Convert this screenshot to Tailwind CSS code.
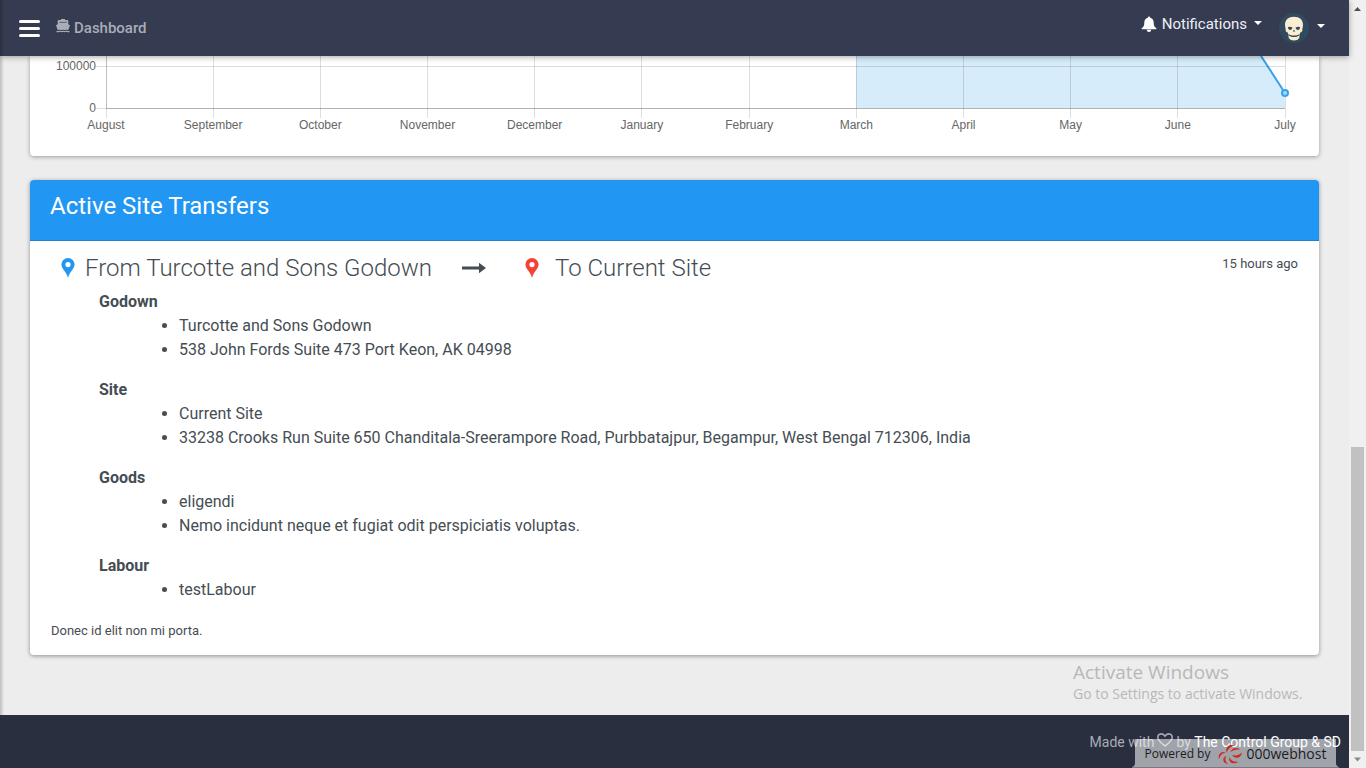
<!DOCTYPE html>
<html lang="en">
<head>
<meta charset="utf-8">
<title>Dashboard</title>
<script src="https://cdn.jsdelivr.net/npm/@tailwindcss/browser@4"></script>
</head>
<body class="flex h-screen overflow-hidden bg-[#ededed] font-['Roboto',sans-serif] text-base text-[#454d54]">
<div class="relative flex min-w-0 flex-1 flex-col">
  <header class="relative z-10 flex h-14 shrink-0 items-center bg-[#353b50] pl-[19px] pr-6 shadow-[0_1px_6px_rgba(0,0,0,0.35)]">
    <button aria-label="Toggle menu" class="flex w-[21px] flex-col gap-1">
      <span class="h-[3px] rounded-xs bg-white"></span>
      <span class="h-[3px] rounded-xs bg-white"></span>
      <span class="h-[3px] rounded-xs bg-white"></span>
    </button>
    <a href="#" class="ml-4 flex items-center gap-1 text-[15px] font-medium text-[#a9adb8]">
      <svg class="mb-1 h-[14px] w-[14px]" viewBox="0 0 14 14" fill="currentColor"><path d="M5 0h4v1h2.400q.9 0 .9.900v3.300L14 6.200l-1.700 4.900q-1.200 0-1.900-.6-.9.600-1.700.6T7 10.500q-.9.600-1.700.6t-1.700-.6q-.8.600-1.900.6L0 6.200l1.700-1V1.900q0-.9.900-.9H5z"/><path d="M3.200 2.800h7.600v1.100H3.200z" fill="#353b50" fill-opacity="0.6"/><path d="M.5 12q1.600.4 3.100-.5 1.700 1 3.400 0 1.700 1 3.400 0 1.500.9 3.100.5v1.200q-1.600.3-3.100-.5-1.700.9-3.400 0-1.700.9-3.400 0-1.500.8-3.100.5z"/></svg>
      Dashboard
    </a>
    <div class="ml-auto flex items-center gap-[17px]">
      <button class="mb-2 flex items-center gap-[5px] text-[15px] text-[#edeff8]">
        <svg class="h-4 w-4" viewBox="0 0 16 16" fill="white"><path d="M8 .5a1.300 1.300 0 0 1 1.200 1.200C11.600 2.300 12.700 4.200 12.700 6.500c0 3.200.6 4.600 2.600 5.400v1.300H.7v-1.300c2-.8 2.600-2.200 2.600-5.400 0-2.300 1.100-4.200 3.500-4.800A1.300 1.300 0 0 1 8 .5zM5.800 13.800h4.400a2.200 2.200 0 0 1-4.400 0z"/></svg>
        Notifications
        <svg class="ml-[2px] mb-[3px] h-1 w-2" viewBox="0 0 8 4" fill="white"><path d="M0 0h8L4 4z"/></svg>
      </button>
      <button aria-label="Account" class="flex items-center gap-2">
        <svg class="h-[30px] w-[30px]" viewBox="0 0 30 30"><circle cx="15" cy="15" r="15" fill="#324a5e"/><path d="M6 12C6 6.500 9.600 3.700 15 3.700S24 6.500 24 12c0 2-.7 3-.7 4.400.5 1.600-.7 2.700-2.100 3.200l-.8 3.200H9.600l-.8-3.200c-1.400-.5-2.600-1.600-2.100-3.200C6.700 15 6 14 6 12z" fill="#fbedd2"/><path d="M9.300 22.300q5.700 3.200 11.400 0l-.6 3q-1.300 2.200-5.100 2.200t-5.100-2.200z" fill="#fbedd2"/><path d="M9 14q2.100-.8 4.500.5-.2 2.400-2.400 2.400Q9 16.900 9 14zm12 0q-2.100-.8-4.500.5.2 2.400 2.400 2.400 2.100 0 2.100-2.900zM15 16.500l1.200 2h-2.400z" fill="#324a5e"/><path d="M9.500 21.800q5.500 3.200 11 0" fill="none" stroke="#324a5e" stroke-width="1.100"/></svg>
        <svg class="mb-1 h-1 w-2" viewBox="0 0 8 4" fill="white"><path d="M0 0h8L4 4z"/></svg>
      </button>
    </div>
  </header>

  <main class="mx-[30px] flex flex-col gap-6">
    <section aria-label="Monthly chart" class="flex h-[100px] rounded-b bg-white pr-[34px] font-['Liberation_Sans',sans-serif] text-xs text-[#666] shadow-[0_1px_4px_rgba(0,0,0,0.35)]">
      <div class="flex w-[76px] flex-col items-end gap-[26px] pr-[10px] pt-[2px] leading-4">
        <span>100000</span><span>0</span>
      </div>
      <svg class="h-[100px] min-w-0 flex-1 overflow-visible" fill="#666">
        <svg width="100%" height="52" viewBox="0 0 1179 52" preserveAspectRatio="none" class="overflow-visible">
          <path d="M750 0H1155L1179 37V52H750z" fill="#d7ecfb"/>
          <path d="M1155 0L1179 37" stroke="#36a2eb" stroke-width="2"/>
        </svg>
        <g stroke="#000" stroke-opacity="0.13" shape-rendering="crispEdges">
          <path d="M-10 10.500H0M-10 52.500H0"/>
          <line x1="0" x2="100%" y1="10.500" y2="10.500"/>
          <line x1="0" x2="0" y1="0" y2="52" stroke-opacity="0.25"/>
          <line x1="0" x2="0" y1="52" y2="62"/>
          <line x1="9.090%" x2="9.090%" y1="0" y2="62"/>
          <line x1="18.180%" x2="18.180%" y1="0" y2="62"/>
          <line x1="27.270%" x2="27.270%" y1="0" y2="62"/>
          <line x1="36.360%" x2="36.360%" y1="0" y2="62"/>
          <line x1="45.450%" x2="45.450%" y1="0" y2="62"/>
          <line x1="54.550%" x2="54.550%" y1="0" y2="62"/>
          <line x1="63.640%" x2="63.640%" y1="0" y2="62"/>
          <line x1="72.730%" x2="72.730%" y1="0" y2="62"/>
          <line x1="81.820%" x2="81.820%" y1="0" y2="62"/>
          <line x1="90.910%" x2="90.910%" y1="0" y2="62"/>
          <line x1="100%" x2="100%" y1="0" y2="62"/>
          <line x1="0" x2="100%" y1="52" y2="52" stroke-opacity="0.3"/>
        </g>
        <circle cx="100%" cy="37" r="3" fill="#a8d7f7" stroke="#36a2eb" stroke-width="2"/>
        <g text-anchor="middle">
          <text x="0" y="73">August</text>
          <text x="9.090%" y="73">September</text>
          <text x="18.180%" y="73">October</text>
          <text x="27.270%" y="73">November</text>
          <text x="36.360%" y="73">December</text>
          <text x="45.450%" y="73">January</text>
          <text x="54.550%" y="73">February</text>
          <text x="63.640%" y="73">March</text>
          <text x="72.730%" y="73">April</text>
          <text x="81.820%" y="73">May</text>
          <text x="90.910%" y="73">June</text>
          <text x="100%" y="73">July</text>
        </g>
      </svg>
    </section>

    <section class="rounded bg-white shadow-[0_1px_4px_rgba(0,0,0,0.4)]">
      <h2 class="h-[61px] rounded-t border-b border-[#1f7fd0] bg-[#2196f3] px-5 pt-[10px] text-2xl leading-8 text-white">Active Site Transfers</h2>
      <div class="px-[21px] pb-[14px] pt-3">
        <div class="flex items-start justify-between">
          <h3 class="flex items-center pl-[10px] text-2xl font-light leading-[30px]">
            <svg class="h-5 w-[14px]" viewBox="0 0 14 20" fill="#2196f3"><path fill-rule="evenodd" d="M7 0a6.600 6.600 0 0 1 6.600 6.600C13.600 11 8.500 13.500 7 20 5.500 13.500.4 11 .4 6.600A6.600 6.600 0 0 1 7 0zm0 4a2.600 2.600 0 1 0 0 5.200A2.600 2.600 0 0 0 7 4z"/></svg>
            <span class="ml-[10px]">From Turcotte and Sons Godown</span>
            <svg class="ml-[30px] h-3 w-6" viewBox="0 0 24 12" fill="#454d54"><path d="M0 4.500h17V.8L24 6l-7 5.200V7.500H0z"/></svg>
            <svg class="ml-[39px] h-5 w-[14px]" viewBox="0 0 14 20" fill="#f44336"><path fill-rule="evenodd" d="M7 0a6.600 6.600 0 0 1 6.600 6.600C13.600 11 8.500 13.500 7 20 5.500 13.500.4 11 .4 6.600A6.600 6.600 0 0 1 7 0zm0 4a2.600 2.600 0 1 0 0 5.200A2.600 2.600 0 0 0 7 4z"/></svg>
            <span class="ml-4">To Current Site</span>
          </h3>
          <time class="text-[13px] leading-[22px]">15 hours ago</time>
        </div>
        <dl class="mt-[7px] flex flex-col gap-4 pl-12 leading-6">
          <div><dt class="font-bold">Godown</dt><dd><ul class="list-disc pl-20"><li>Turcotte and Sons Godown</li><li>538 John Fords Suite 473 Port Keon, AK 04998</li></ul></dd></div>
          <div><dt class="font-bold">Site</dt><dd><ul class="list-disc pl-20"><li>Current Site</li><li>33238 Crooks Run Suite 650 Chanditala-Sreerampore Road, Purbbatajpur, Begampur, West Bengal 712306, India</li></ul></dd></div>
          <div><dt class="font-bold">Goods</dt><dd><ul class="list-disc pl-20"><li>eligendi</li><li>Nemo incidunt neque et fugiat odit perspiciatis voluptas.</li></ul></dd></div>
          <div><dt class="font-bold">Labour</dt><dd><ul class="list-disc pl-20"><li>testLabour</li></ul></dd></div>
        </dl>
        <p class="mt-[19px] text-[13px] leading-5">Donec id elit non mi porta.</p>
      </div>
    </section>
  </main>

  <footer class="relative z-30 mt-auto flex h-[53px] shrink-0 items-center justify-end bg-[#2a2f40] pr-2 text-sm text-[#a9acb5]">
    <p class="flex items-center">Made with
      <svg class="mx-[3px] mb-1 h-[14px] w-4" viewBox="0 0 16 14" fill="none" stroke="currentColor" stroke-width="1.500"><path d="M8 13C5 10.500.8 7.500.8 4.400.8.500 5.800-.5 8 3.200c2.200-3.700 7.200-2.700 7.200 1.200C15.200 7.500 11 10.500 8 13z"/></svg>
      by&nbsp;<a href="#" class="text-white">The Control Group &amp; SD</a>
    </p>
    <a href="#" class="absolute bottom-0 right-[10px] flex h-[29px] w-[207px] items-center justify-center font-['Open_Sans',sans-serif] text-xs text-[#1c1d22]">
      <svg class="absolute inset-0 h-full w-full" viewBox="0 0 207 29" preserveAspectRatio="none"><path d="M3 0H204V24Q204 27 207 28H0Q3 27 3 24z" fill="#fff" fill-opacity="0.56"/><path d="M0 28.500H207" stroke="#777a84"/></svg>
      <span class="relative flex items-center gap-2">Powered by
      <span class="flex items-center gap-1 text-sm">
        <svg class="h-5 w-6" viewBox="0 0 24 20" fill="#d0261c"><path d="M8.500 8.500C7 3 11-.5 17 1.500 13 2 10.500 4.500 8.500 8.500zM12.500 8c1.500-4.500 7-5.500 10-2-4-1-7 0-10 2zM14 11c3.500 1 7 .5 10-2.500-1 6-7 7-10 2.500zM11.500 13c1 3.500 4.500 5.500 9 4.500-4.500 4-10.500 1-9-4.500zM8.500 11.500c-2 3-1.500 6 1.500 8.500-5.500-1-6.500-6-1.500-8.500zM8.500 8.500c-3.500 0-6.500 2.500-7.500 7C-.5 10 3.500 6.500 8.500 8.500z"/></svg>
        000webhost
      </span></span>
    </a>
  </footer>

  <div aria-hidden="true" class="pointer-events-none absolute inset-y-0 left-0 z-20 w-1 bg-linear-to-r from-black/20 to-transparent"></div>
  <aside class="pointer-events-none absolute bottom-16 right-8 w-[244px] font-['Open_Sans',sans-serif] text-[#b8b8b8]">
    <p class="text-[19px] leading-6">Activate Windows</p>
    <p class="text-sm leading-5">Go to Settings to activate Windows.</p>
  </aside>
</div>

<div aria-hidden="true" class="flex w-[17px] shrink-0 flex-col items-center bg-[#f0f0f0]">
  <svg class="h-[17px] w-[17px] shrink-0" viewBox="0 0 17 17" fill="#505050"><path d="M5 11l3.500-4 3.500 4z"/></svg>
  <div class="flex w-full flex-1 flex-col justify-end px-0.5"><div class="h-[41.400%] bg-[#c1c1c1]"></div></div>
  <svg class="h-[17px] w-[17px] shrink-0" viewBox="0 0 17 17" fill="#8a8a8a"><path d="M5 6.500h7l-3.500 4z"/></svg>
</div>
</body>
</html>
